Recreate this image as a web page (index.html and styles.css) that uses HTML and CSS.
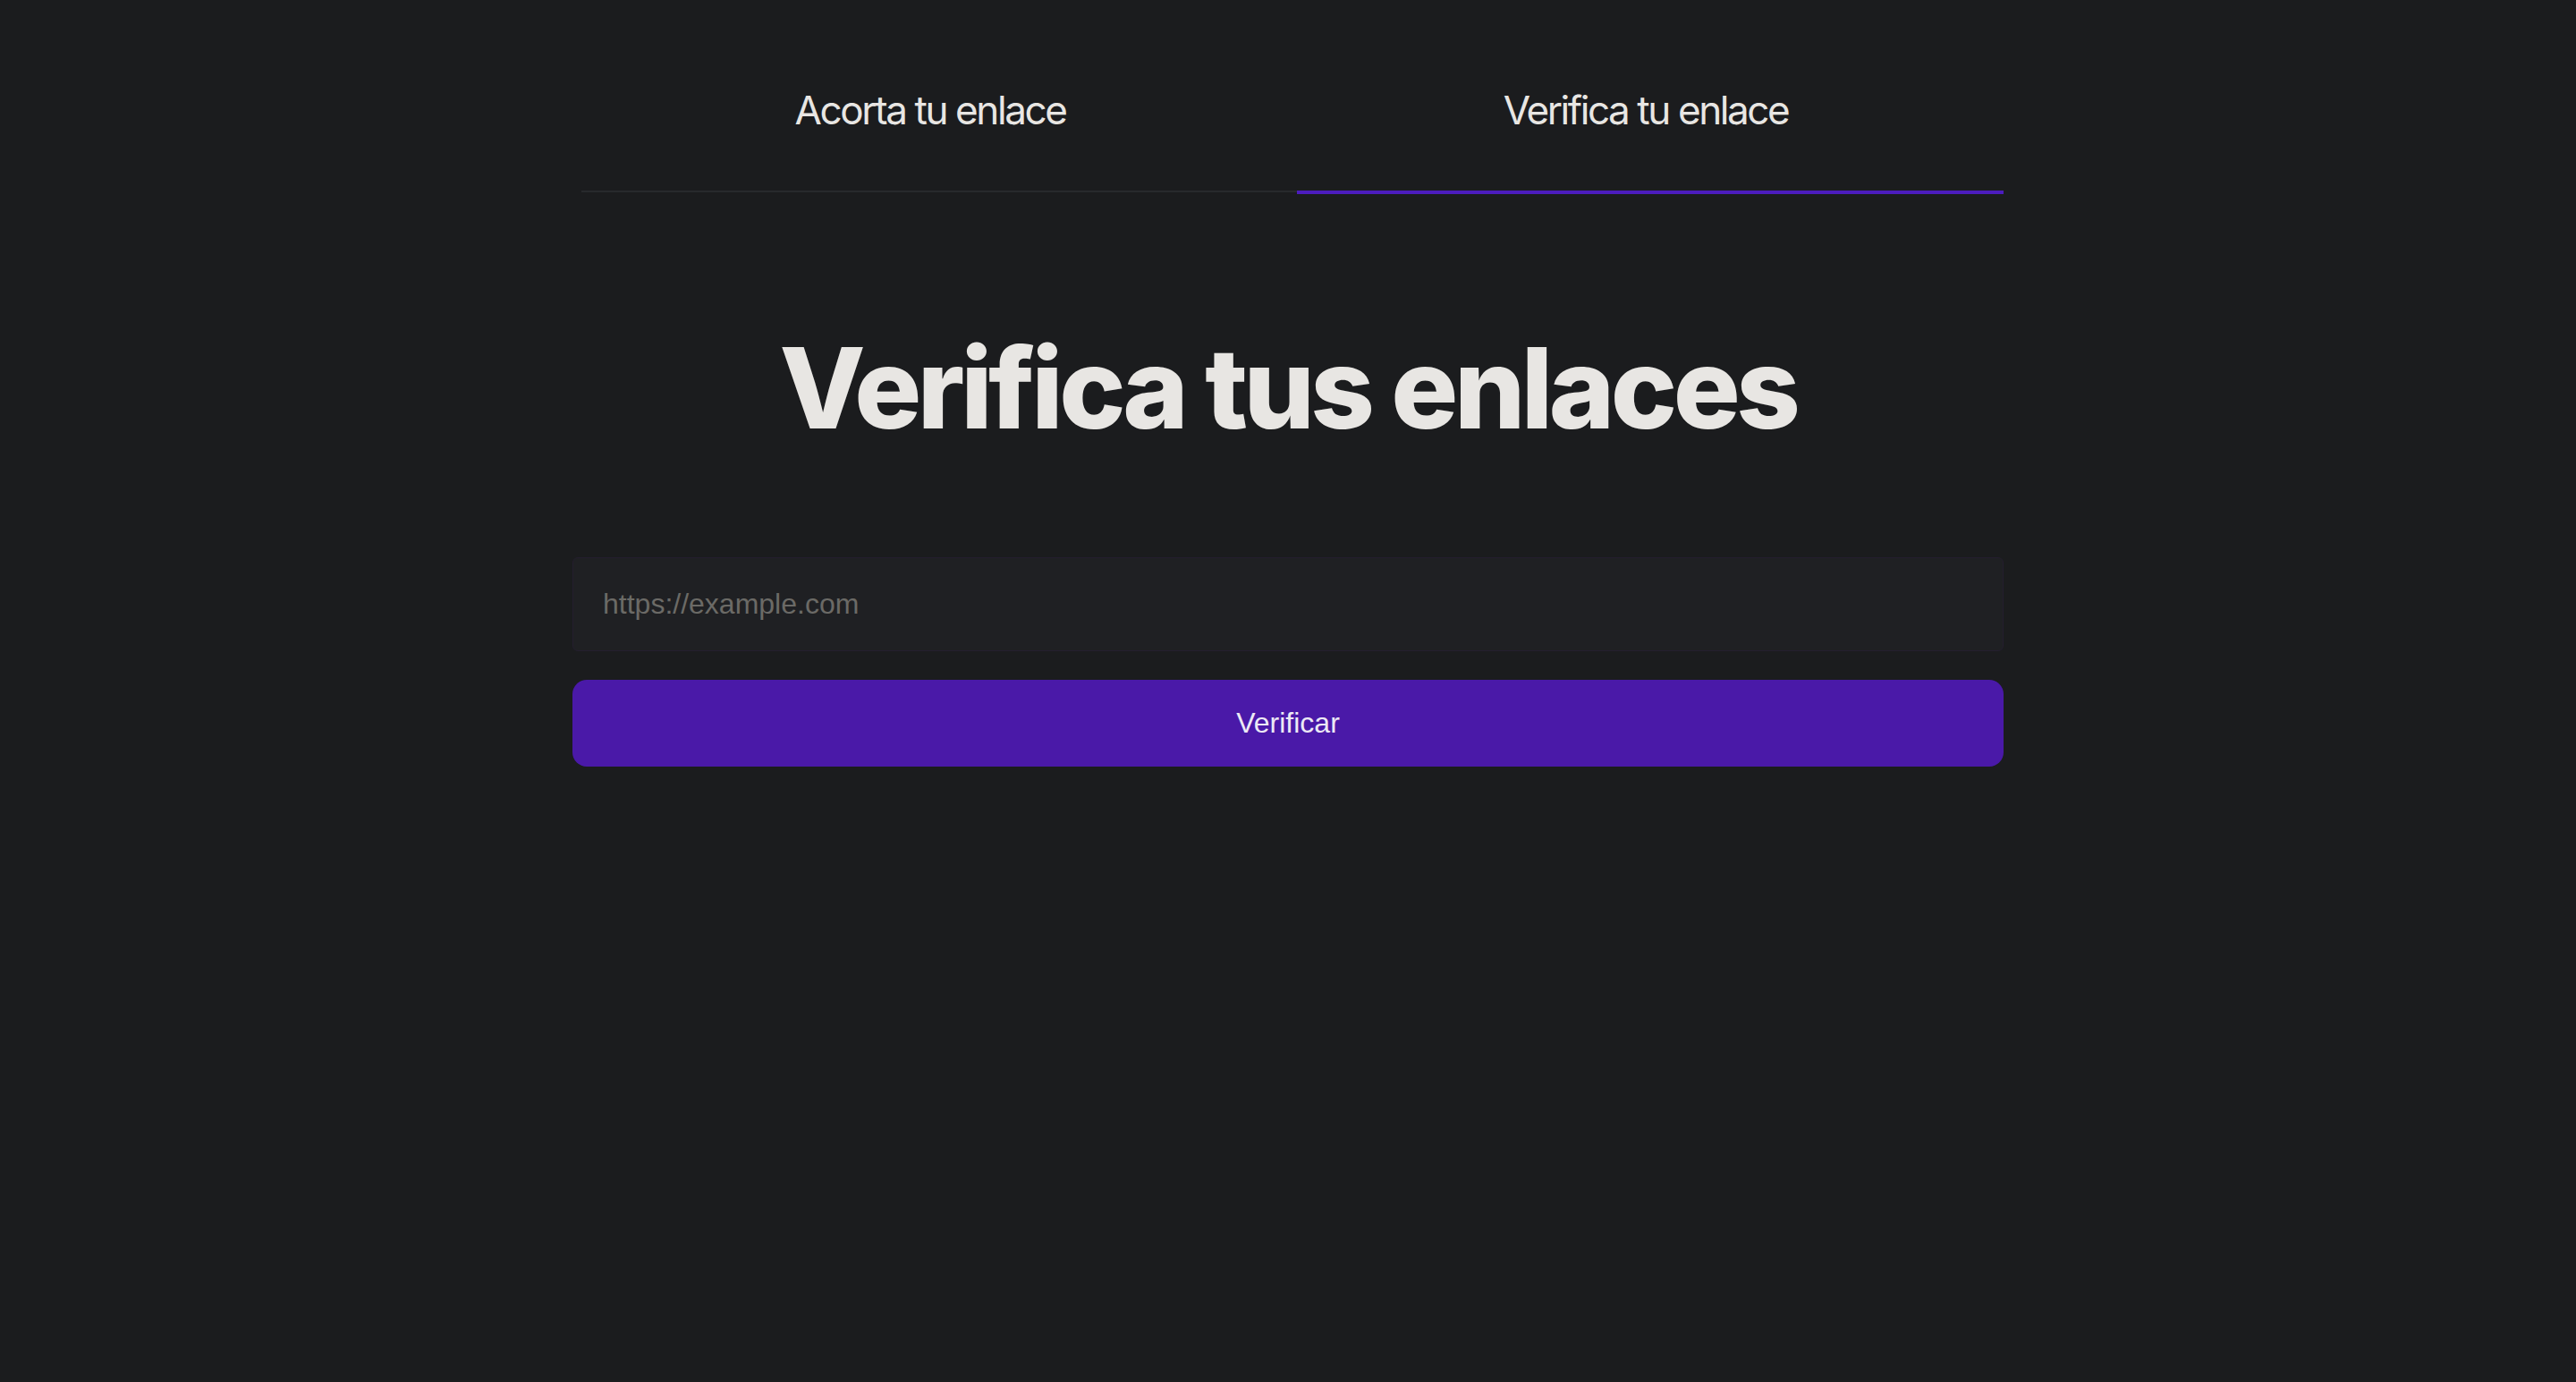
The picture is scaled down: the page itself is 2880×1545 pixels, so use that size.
FILE: index.html
```html
<!DOCTYPE html>
<html lang="es">
<head>
<meta charset="utf-8">
<title>Verifica tus enlaces</title>
<link rel="stylesheet" href="styles.css">
</head>
<body>
<main class="page">
  <nav class="tabs">
    <div class="tab-labels">
      <a class="tab" href="#">Acorta tu enlace</a>
      <a class="tab tab-active" href="#">Verifica tu enlace</a>
    </div>
    <div class="tab-track">
      <span class="track-idle"></span>
      <span class="track-active"></span>
    </div>
  </nav>
  <h1 class="title">Verifica tus enlaces</h1>
  <form class="form">
    <input class="url-input" type="text" placeholder="https://example.com">
    <button class="submit" type="button">Verificar</button>
  </form>
</main>
</body>
</html>
```

FILE: styles.css
```css
* { box-sizing: border-box; }
html, body {
  margin: 0;
  background: #1b1c1e;
  color: #e8e6e3;
  font-family: Inter, "Noto Sans", sans-serif;
  min-height: 100vh;
}
.page {
  width: 1600px;
  margin: 0 auto;
  padding-top: 90px;
}
.tabs {
  display: flex;
  flex-direction: column;
}
.tab-labels {
  display: grid;
  grid-template-columns: 1fr 1fr;
}
.tab {
  text-align: center;
  font-size: 44px;
  line-height: 66px;
  color: #e8e6e3;
  text-decoration: none;
  padding-bottom: 57px;
  letter-spacing: -2.4px;
}
.tab-track {
  display: flex;
  align-items: flex-start;
  height: 4px;
}
.track-idle {
  margin-left: 10px;
  width: 800px;
  height: 2px;
  background: #27292c;
}
.track-active {
  flex: 1;
  height: 4px;
  background: #4c1cbd;
}
.title {
  margin: 154px 0 0;
  text-align: center;
  font-size: 125px;
  line-height: 125px;
  font-weight: 800;
  letter-spacing: -4.5px;
  color: #e8e6e3;
}
.form {
  margin-top: 127px;
  display: flex;
  flex-direction: column;
  gap: 32px;
}
.url-input {
  width: 100%;
  height: 105px;
  padding: 0 33px;
  background: #1f2023;
  border: 1px solid #241e2e;
  border-radius: 6px;
  font-family: "Liberation Sans", Arial, sans-serif;
  font-size: 32px;
  color: #e8e6e3;
  outline: none;
}
.url-input::placeholder {
  color: #6b6a66;
}
.submit {
  width: 100%;
  height: 97px;
  border: none;
  border-radius: 16px;
  background: #4a19a8;
  color: #ece9f5;
  font-family: "Liberation Sans", Arial, sans-serif;
  font-size: 32px;
  cursor: pointer;
}
```
